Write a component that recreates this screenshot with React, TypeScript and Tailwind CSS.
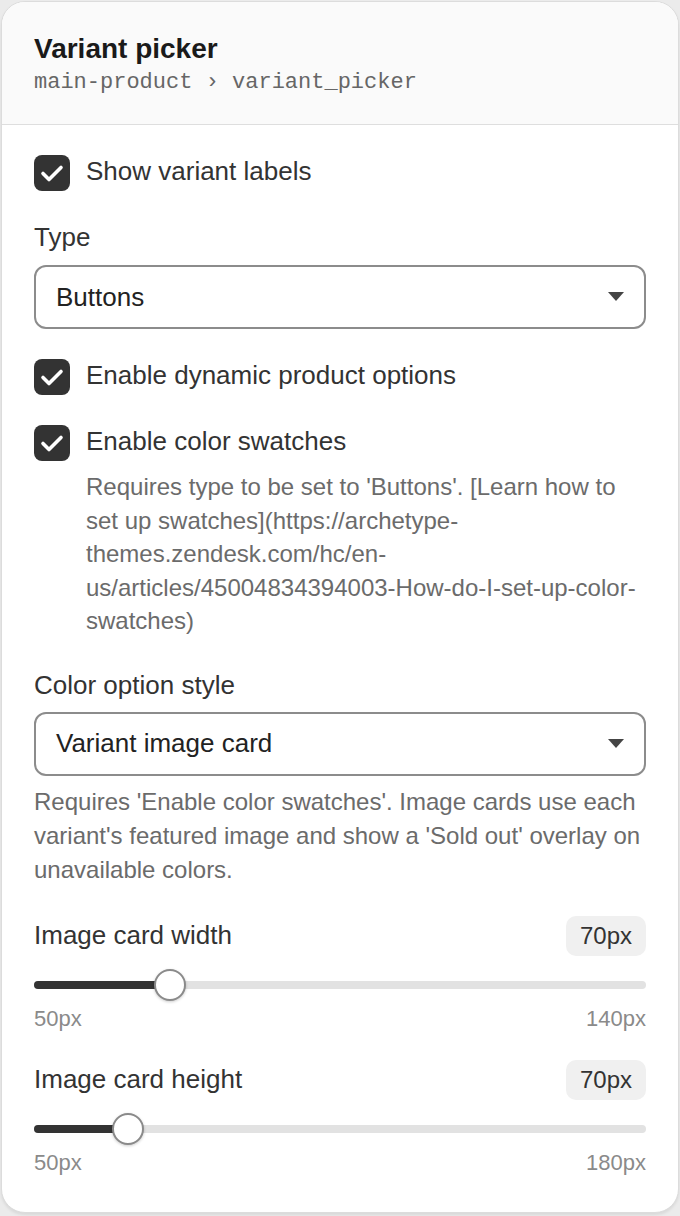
import { useState } from 'react';

const sans = { fontFamily: '"Liberation Sans", Arial, sans-serif' };

function Checkbox({ label, checked, children }: { label: string; checked: boolean; children?: React.ReactNode }) {
  return (
    <div className="flex items-start gap-4">
      <div
        className={`w-9 h-9 shrink-0 rounded-lg flex items-center justify-center ${
          checked ? 'bg-[#333333]' : 'bg-white border-2 border-[#888]'
        }`}
      >
        {checked && (
          <svg width="28" height="28" viewBox="0 0 28 28" fill="none">
            <path d="M5 14.5 L11 20.5 L23 8.5" stroke="white" strokeWidth="3.6" strokeLinecap="round" strokeLinejoin="round" />
          </svg>
        )}
      </div>
      <div className="flex-1">
        <div className="text-[26px] leading-[32px] text-[#333]">{label}</div>
        {children}
      </div>
    </div>
  );
}

function Select({ value }: { value: string }) {
  return (
    <div className="h-16 rounded-xl border-2 border-[#8c8c8c] flex items-center justify-between pl-5 pr-5">
      <span className="text-[26px] text-[#222]">{value}</span>
      <svg width="16" height="10" viewBox="0 0 16 10">
        <path d="M0 0 H16 L8 9 Z" fill="#444" />
      </svg>
    </div>
  );
}

function RangeField({ label, value, min, max }: { label: string; value: number; min: number; max: number }) {
  const pct = ((value - min) / (max - min)) * 100;
  return (
    <div>
      <div className="flex items-center justify-between">
        <span className="text-[26px] text-[#333]">{label}</span>
        <span className="h-10 px-[14px] rounded-[10px] bg-[#f0f0f0] text-[24px] text-[#333] flex items-center">
          {value}px
        </span>
      </div>
      <div className="relative h-8 mt-[13px] flex items-center">
        <div className="w-full h-2 rounded-full bg-[#e2e2e2]" />
        <div className="absolute left-0 h-2 rounded-full bg-[#333]" style={{ width: `${pct}%` }} />
        <div
          className="absolute w-8 h-8 -ml-4 rounded-full bg-white border-2 border-[#8a8a8a] shadow-[0_1px_3px_rgba(0,0,0,0.2)]"
          style={{ left: `${pct}%` }}
        />
      </div>
      <div className="flex justify-between mt-1 text-[22px] leading-[28px] text-[#8a8a8a]">
        <span>{min}px</span>
        <span>{max}px</span>
      </div>
    </div>
  );
}

export default function App() {
  const [showLabels] = useState(true);

  return (
    <div className="w-[680px] h-[1216px] bg-[#ebebeb] p-px" style={sans}>
      <div className="h-[1212px] rounded-[24px] border border-[#dcdcdc] bg-white overflow-hidden shadow-[0_2px_3px_rgba(0,0,0,0.08)]">
        {/* Header */}
        <div className="bg-[#fafafa] border-b border-[#dedede] px-8 pt-[31px] pb-[27px]">
          <h1 className="text-[28px] leading-[32px] font-bold text-[#1a1a1a]">Variant picker</h1>
          <p
            className="mt-[4px] text-[22px] leading-[28px] text-[#666]"
            style={{ fontFamily: '"Liberation Mono", "Courier New", monospace' }}
          >
            main-product › variant_picker
          </p>
        </div>

        {/* Settings */}
        <div className="px-8 pt-[30px]">
          <Checkbox label="Show variant labels" checked={showLabels} />

          <div className="mt-[30px] text-[26px] leading-[32px] text-[#333]">Type</div>
          <div className="mt-3">
            <Select value="Buttons" />
          </div>

          <div className="mt-[30px]">
            <Checkbox label="Enable dynamic product options" checked />
          </div>

          <div className="mt-[30px]">
            <Checkbox label="Enable color swatches" checked>
              <p className="mt-[13px] text-[24px] leading-[33.5px] text-[#6b6b6b]">
                Requires type to be set to 'Buttons'. [Learn how to set up swatches](https://archetype-themes.zendesk.com/hc/en-us/articles/45004834394003-How-do-I-set-up-color-swatches)
              </p>
            </Checkbox>
          </div>

          <div className="mt-[31px] text-[26px] leading-[32px] text-[#333]">Color option style</div>
          <div className="mt-[11px]">
            <Select value="Variant image card" />
          </div>
          <p className="mt-[9px] text-[24px] leading-[34px] text-[#6b6b6b]">
            Requires 'Enable color swatches'. Image cards use each variant's featured image and show a 'Sold out'
            overlay on unavailable colors.
          </p>

          <div className="mt-[29px]">
            <RangeField label="Image card width" value={70} min={50} max={140} />
          </div>
          <div className="mt-[27px]">
            <RangeField label="Image card height" value={70} min={50} max={180} />
          </div>
        </div>
      </div>
    </div>
  );
}
